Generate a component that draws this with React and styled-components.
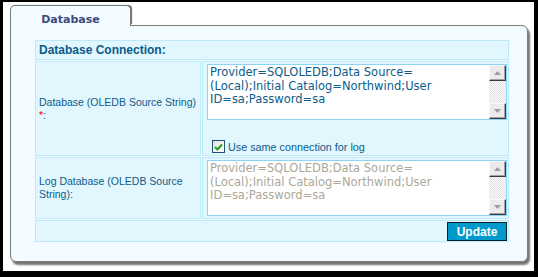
import styled, { createGlobalStyle } from "styled-components";

const GlobalStyle = createGlobalStyle`
  html, body {
    margin: 0;
    padding: 0;
    background: #000;
  }
`;

const Frame = styled.div`
  box-sizing: border-box;
  margin: 2px 4px 6px 3px;
  height: 269px;
  background: #fff;
  padding: 3px 0 0 7px;
  font-family: "Liberation Sans", Arial, sans-serif;
`;

const Tab = styled.div`
  position: relative;
  z-index: 1;
  box-sizing: border-box;
  width: 121px;
  height: 21px;
  margin-bottom: -1px;
  border: 1px solid #7b7b7b;
  border-bottom: none;
  border-radius: 5px 5px 0 0;
  background: #f2fbff;
  box-shadow: 2px -1px 1px -1px rgba(0, 0, 0, 0.6);
  display: flex;
  align-items: center;
  justify-content: center;
  padding-top: 7px;
  font-family: "DejaVu Sans", Verdana, sans-serif;
  font-weight: bold;
  font-size: 11px;
  color: #3d4a7c;
`;

const Panel = styled.div`
  box-sizing: border-box;
  width: 518px;
  height: 237px;
  border: 1px solid #7b7b7b;
  border-radius: 0 6px 6px 6px;
  background: #f2fbff;
  box-shadow: 2px 3px 2px rgba(0, 0, 0, 0.55);
  padding: 14px 0 0 24px;
`;

const Grid = styled.div`
  display: grid;
  width: 474px;
  grid-template-columns: 166px 307px;
  grid-template-rows: 20px 95px 62px 22px;
  gap: 1px;
`;

const Cell = styled.div`
  box-sizing: border-box;
  border: 1px solid #bde9f9;
  background: #e2f6fd;
  grid-column: ${(p) => (p.$wide ? "1 / span 2" : "auto")};
`;

const HeaderCell = styled(Cell)`
  display: flex;
  align-items: center;
  padding: 0 3px;
  font-weight: bold;
  font-size: 12px;
  color: #0a5b8a;
`;

const LabelCell = styled(Cell)`
  display: flex;
  align-items: center;
  padding: 0 0 0 3px;
  font-size: 10.5px;
  line-height: 13px;
  color: #0c5d8a;
`;

const NoWrap = styled.span`
  white-space: nowrap;
`;

const Required = styled.span`
  color: #ff0000;
`;

const ValueCell = styled(Cell)`
  display: flex;
  flex-direction: column;
  padding: 2px 1px 0 4px;
`;

const FooterCell = styled(Cell)`
  display: flex;
  justify-content: flex-end;
  align-items: flex-start;
  padding: 1px 1px 0 0;
`;

const TextBox = styled.div`
  box-sizing: border-box;
  display: flex;
  width: 300px;
  height: 56px;
  border: 1px solid #8ad5f2;
  background: #fff;
`;

const Area = styled.textarea`
  flex: 1;
  margin: 0;
  border: none;
  outline: none;
  resize: none;
  overflow: hidden;
  padding: 1px 2px;
  background: #fff;
  font-family: "DejaVu Sans", Verdana, sans-serif;
  font-size: 11.5px;
  line-height: 13.5px;
  color: ${(p) => (p.$muted ? "#aca899" : "#0c5d8a")};

  &:disabled {
    background: #fff;
    color: #aca899;
  }
`;

const ScrollBar = styled.div`
  display: flex;
  flex-direction: column;
  width: 17px;
`;

const ScrollButton = styled.div`
  box-sizing: border-box;
  height: 16px;
  background: #ebebeb;
  border: 1px solid;
  border-color: #f7f7f7 #3c3c3c #3c3c3c #f7f7f7;
  box-shadow: inset -1px -1px 0 #a0a0a0;
  display: flex;
  align-items: center;
  justify-content: center;
`;

const Track = styled.div`
  flex: 1;
  background: repeating-conic-gradient(#f6f6f6 0 25%, #e6e6e6 0 50%) 0 0 / 2px 2px;
`;

const CheckRow = styled.label`
  display: flex;
  align-items: center;
  gap: 3px;
  margin-top: 20px;
  padding-left: 5px;
  font-size: 10.8px;
  color: #0c5d8a;
`;

const CheckBox = styled.span`
  box-sizing: border-box;
  width: 13px;
  height: 13px;
  border: 1px solid #1c5180;
  background: linear-gradient(135deg, #e4e4de, #ffffff);
  display: flex;
  align-items: center;
  justify-content: center;
`;

const UpdateButton = styled.button`
  box-sizing: border-box;
  width: 60px;
  height: 19px;
  margin: 0;
  padding: 0;
  border: 1px solid #0b2231;
  background: #0099cc;
  color: #fff;
  font-family: "Liberation Sans", Arial, sans-serif;
  font-weight: bold;
  font-size: 12px;
  cursor: pointer;
`;

const Arrow = ({ up }) => (
  <svg width="7" height="4" viewBox="0 0 7 4">
    <polygon points={up ? "3.5,0 7,4 0,4" : "0,0 7,0 3.5,4"} fill="#9c9c9c" />
  </svg>
);

const CONN =
  "Provider=SQLOLEDB;Data Source=\u200B(Local);Initial Catalog=Northwind;User ID=sa;Password=sa";

function ConnBox({ muted }) {
  return (
    <TextBox>
      <Area defaultValue={CONN} $muted={muted} disabled={muted} spellCheck={false} />
      <ScrollBar>
        <ScrollButton>
          <Arrow up />
        </ScrollButton>
        <Track />
        <ScrollButton>
          <Arrow />
        </ScrollButton>
      </ScrollBar>
    </TextBox>
  );
}

export default function App() {
  return (
    <Frame>
      <GlobalStyle />
      <Tab>Database</Tab>
      <Panel>
        <Grid>
          <HeaderCell $wide>Database Connection:</HeaderCell>
          <LabelCell>
            <span>
              <NoWrap>Database (OLEDB Source String)</NoWrap> <Required>*</Required>:
            </span>
          </LabelCell>
          <ValueCell>
            <ConnBox />
            <CheckRow>
              <CheckBox>
                <svg width="9" height="8" viewBox="0 0 9 8">
                  <path d="M1 4 L3.5 6.5 L8 1.5" stroke="#21a121" strokeWidth="2" fill="none" />
                </svg>
              </CheckBox>
              Use same connection for log
            </CheckRow>
          </ValueCell>
          <LabelCell>
            <span>Log Database (OLEDB Source String):</span>
          </LabelCell>
          <ValueCell>
            <ConnBox muted />
          </ValueCell>
          <FooterCell $wide>
            <UpdateButton>Update</UpdateButton>
          </FooterCell>
        </Grid>
      </Panel>
    </Frame>
  );
}
